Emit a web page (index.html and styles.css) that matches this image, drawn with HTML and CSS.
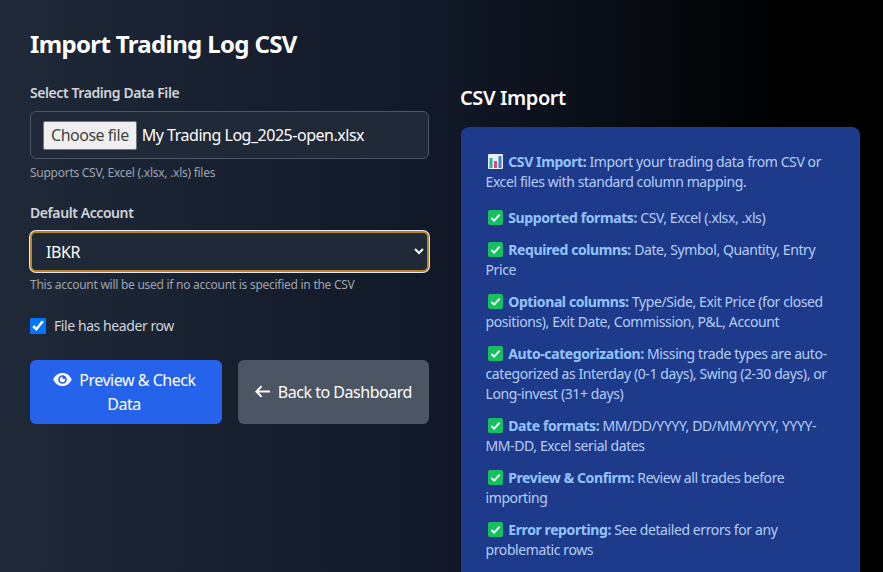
FILE: index.html
```html
<!DOCTYPE html>
<html lang="en">
<head>
  <meta charset="UTF-8">
  <title>Import Trading Log CSV</title>
  <link rel="stylesheet" href="styles.css">
</head>
<body>
  <svg class="defs" width="0" height="0">
    <symbol id="tick" viewBox="0 0 15 15">
      <rect width="15" height="15" rx="2" fill="#16c060"/>
      <path d="M3.4 7.8l2.8 2.8 5.4-6" fill="none" stroke="#fff" stroke-width="1.9"/>
    </symbol>
  </svg>
  <div class="page">
    <div class="left">
      <h1>Import Trading Log CSV</h1>
      <div class="field">
        <label class="lbl">Select Trading Data File</label>
        <div class="file-box">
          <button class="choose">Choose file</button>
          <span class="file-name">My Trading Log_2025-open.xlsx</span>
        </div>
        <div class="hint">Supports CSV, Excel (.xlsx, .xls) files</div>
      </div>
      <div class="field">
        <label class="lbl">Default Account</label>
        <select class="acct"><option>IBKR</option></select>
        <div class="hint">This account will be used if no account is specified in the CSV</div>
      </div>
      <label class="check-row"><input type="checkbox" checked> File has header row</label>
      <div class="actions">
        <button class="btn btn-blue">
          <svg class="ico-eye" viewBox="0 0 20 14"><path fill="#fff" fill-rule="evenodd" d="M10 0C5.4 0 1.7 2.9 0 7c1.700 4.100 5.400 7 10 7s8.300-2.900 10-7c-1.700-4.100-5.400-7-10-7zm0 11.700A4.700 4.700 0 1 1 10 2.300a4.700 4.700 0 0 1 0 9.400zm0-7.600a2.900 2.900 0 1 0 2.900 2.900c0-.4-.1-.8-.2-1.100-.3.400-.7.600-1.200.600-.9 0-1.500-.7-1.500-1.500 0-.4.100-.7.300-.9H10z"/></svg>
          Preview &amp; Check Data
        </button>
        <button class="btn btn-gray">
          <svg class="ico-back" viewBox="0 0 16 14"><path d="M7 1.200L1.500 7 7 12.800M2 7h14" fill="none" stroke="#fff" stroke-width="2.200"/></svg>
          Back to Dashboard
        </button>
      </div>
    </div>
    <div class="right">
      <h2>CSV Import</h2>
      <div class="info">
        <p class="intro">
          <svg class="emo" viewBox="0 0 15 15">
            <rect width="15" height="15" rx="1" fill="#e8eef4"/>
            <rect x="1.500" y="4" width="3" height="10" fill="#21b3a4"/>
            <rect x="6" y="7" width="3" height="7" fill="#e0457b"/>
            <rect x="10.500" y="2" width="3" height="12" fill="#3b82c4"/>
          </svg>
          <b>CSV Import:</b> Import your trading data from CSV or Excel files with standard column mapping.</p>
        <p><svg class="emo"><use href="#tick"/></svg> <b>Supported formats:</b> CSV, Excel (.xlsx, .xls)</p>
        <p><svg class="emo"><use href="#tick"/></svg> <b>Required columns:</b> Date, Symbol, Quantity, Entry Price</p>
        <p><svg class="emo"><use href="#tick"/></svg> <b>Optional columns:</b> Type/Side, Exit Price (for closed positions), Exit Date, Commission, P&amp;L, Account</p>
        <p><svg class="emo"><use href="#tick"/></svg> <b>Auto-categorization:</b> Missing trade types are auto-categorized as Interday (0-1 days), Swing (2-30 days), or Long-invest (31+ days)</p>
        <p><svg class="emo"><use href="#tick"/></svg> <b>Date formats:</b> MM/DD/YYYY, DD/MM/YYYY, YYYY-MM-DD, Excel serial dates</p>
        <p><svg class="emo"><use href="#tick"/></svg> <b>Preview &amp; Confirm:</b> Review all trades before importing</p>
        <p><svg class="emo"><use href="#tick"/></svg> <b>Error reporting:</b> See detailed errors for any problematic rows</p>
      </div>
    </div>
  </div>
</body>
</html>
```

FILE: styles.css
```css
html, body { height: 100%; }
body {
  margin: 0; height: 572px; overflow: hidden;
  font-family: "Noto Sans", "Open Sans", sans-serif;
  letter-spacing: -0.025em;
  color: #fff;
  background: linear-gradient(90deg, #1f2937 0%, #111827 50%, #000 90%);
}
.defs { position: absolute; }
.page { display: grid; grid-template-columns: 399px 399px; column-gap: 32px; padding: 29px 23px 0 30px; }
h1 { margin: 0 0 24px 0; font-size: 24px; line-height: 30px; font-weight: 700; letter-spacing: -0.027em; }
h2 { margin: 0 0 15px -1px; font-size: 20px; line-height: 28px; font-weight: 600; }
.right { padding-top: 55px; }
.field { margin-bottom: 22px; }
.field + .field { margin-bottom: 23px; }
.lbl { display: block; font-size: 14px; line-height: 20px; font-weight: 600; letter-spacing: -0.03em; color: #d1d5db; margin-bottom: 8px; }
.file-box {
  height: 46px; display: flex; align-items: center; gap: 5px; padding: 0 12px;
  background: #1f2937; border: 1px solid #4b5563; border-radius: 6px;
}
.choose {
  height: 29px; padding: 0 7px; background: #efefef; border: 1px solid #767676; border-radius: 2px;
  font: 16px "Noto Sans", sans-serif; letter-spacing: -0.03em; color: #444;
}
.file-name { font-size: 16px; letter-spacing: -0.03em; }
.hint { font-size: 12px; line-height: 16px; letter-spacing: -0.022em; color: #9ca3af; margin-top: 6px; }
.field + .field .hint { margin-top: 5px; }
.acct {
  display: block; width: 100%; height: 41px; padding: 0 10px; box-sizing: border-box;
  color-scheme: dark; color: #fff; background: #1f2937;
  border: 2px solid #b8862a; border-radius: 6px; box-shadow: 0 0 0 1px #e3e9f2;
  font: 16px "Noto Sans", sans-serif; letter-spacing: -0.025em; outline: none;
}
.check-row { display: flex; align-items: center; gap: 8px; font-size: 14px; line-height: 20px; letter-spacing: -0.03em; color: #d1d5db; }
.check-row input { margin: 0; width: 16px; height: 16px; }
.actions { display: grid; grid-template-columns: 192px 191px; column-gap: 16px; margin-top: 24px; }
.btn {
  height: 64px; padding: 8px 16px; border: 0; border-radius: 6px; color: #fff;
  font: 400 16px/24px "Noto Sans", sans-serif; letter-spacing: -0.03em; text-align: center;
}
.btn-blue { background: #2563eb; padding: 8px 18px 8px 14px; }
.btn-gray { background: #4b5563; padding: 8px 10px; }
.ico-eye { width: 19px; height: 13px; margin-right: 4px; }
.ico-back { width: 15px; height: 13px; margin-right: 4px; }
.info {
  height: 560px; box-sizing: border-box; padding: 25px 25px 25px 24.500px;
  background: #1e3a8a; border-radius: 8px; color: #b3cff8;
  font-size: 14px; line-height: 20px;
}
.info p { margin: 0 0 12px 0; }
.info p.intro { margin-bottom: 16px; }
.info b { color: #93c5fd; font-weight: 700; }
.emo { width: 15px; height: 15px; margin: 0 2px 0 2.500px; vertical-align: -2px; }
```
